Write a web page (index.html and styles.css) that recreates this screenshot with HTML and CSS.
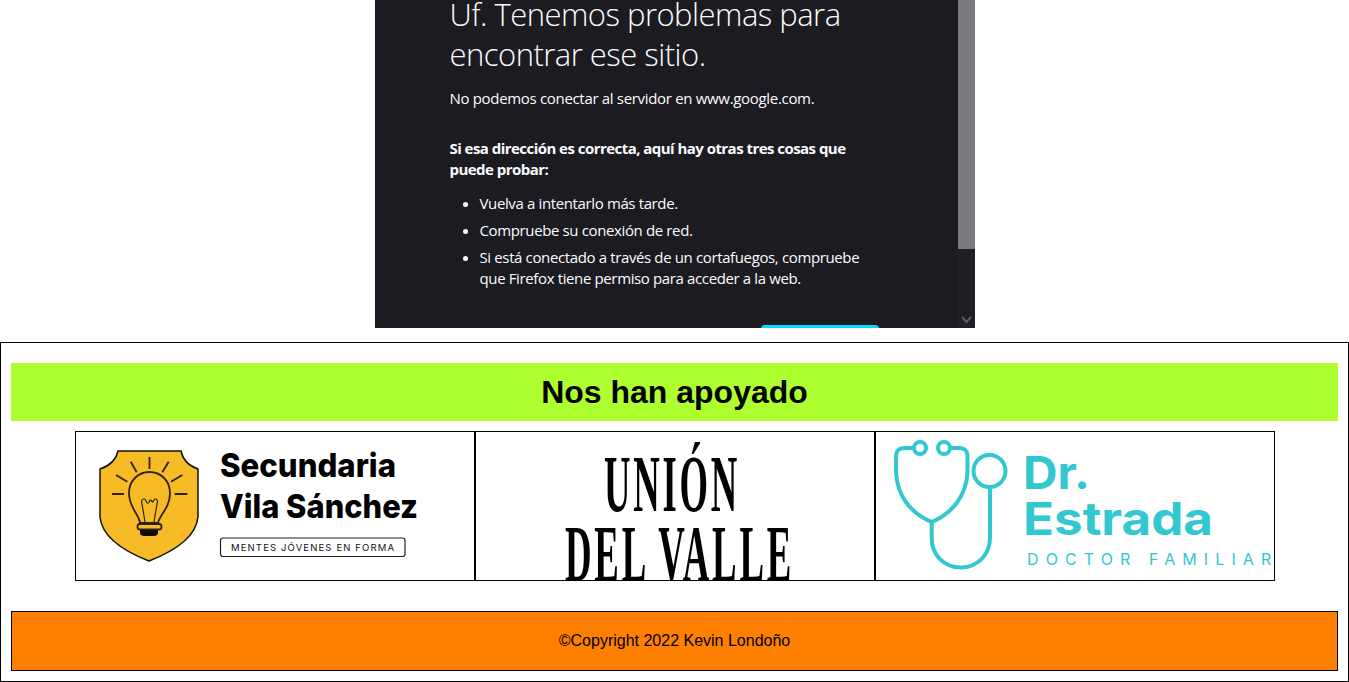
FILE: index.html
```html
<!DOCTYPE html>
<html lang="es">
<head>
<meta charset="utf-8">
<title>Nos han apoyado</title>
<link rel="stylesheet" href="styles.css">
</head>
<body>
<div class="video-row">
  <div class="error-panel">
    <div class="error-content">
      <h1 class="error-title">Uf. Tenemos problemas para<br>encontrar ese sitio.</h1>
      <p class="error-lead">No podemos conectar al servidor en www.google.com.</p>
      <p class="error-strong">Si esa dirección es correcta, aquí hay otras tres cosas que<br>puede probar:</p>
      <ul class="error-list">
        <li>Vuelva a intentarlo más tarde.</li>
        <li>Compruebe su conexión de red.</li>
        <li>Si está conectado a través de un cortafuegos, compruebe<br>que Firefox tiene permiso para acceder a la web.</li>
      </ul>
      <div class="error-action"><span class="error-button"></span></div>
    </div>
    <div class="scrollbar">
      <div class="scroll-thumb"></div>
      <svg class="scroll-arrow" viewBox="0 0 17 17" width="17" height="17"><path d="M4 6l4.500 5 4.500-5" fill="none" stroke="#5c5c62" stroke-width="2"/></svg>
    </div>
  </div>
</div>
<section class="support">
  <h2 class="support-title">Nos han apoyado</h2>
  <div class="logos">
    <div class="logo">
      <svg class="logo-art" viewBox="76 432 398 148" width="398" height="148">
        <path class="shield" d="M118 451H181C183 460 189 466 198 469V517C196 538 172 552 149 561C126 552 102 538 100 517V469C109 466 116 460 118 451Z"/>
        <g class="bulb">
          <path d="M140 523C139 514 129 508 129 493C129 481 138 472 149.500 472C161 472 170 481 170 493C170 508 160 514 158 523Z"/>
          <path d="M149.500 457V469M130.700 461.700L136.700 472.300M168.700 461.700L162.300 472.300M116 475L127.300 481.700M182.300 475L171 481.700M112 494H124M174.700 494H187.300"/>
          <path class="thin" d="M145 522L141.500 501C143 498 145 498 146 501C147 504 149 504 149.500 501C150.500 498 152.500 504 153.500 501C154.500 498 156.500 498 157.500 501L154 522"/>
          <rect x="137.500" y="524" width="24" height="5.500" rx="2.500"/>
        </g>
        <path class="bulb-base" d="M140 530H158V533C158 535 156 536 154 536H144C142 536 140 535 140 533Z"/>
        <text class="school" x="220" y="477" textLength="176" lengthAdjust="spacingAndGlyphs">Secundaria</text>
        <text class="school" x="220" y="518" textLength="198" lengthAdjust="spacingAndGlyphs">Vila Sánchez</text>
        <rect class="tag-box" x="220.500" y="538" width="184.500" height="18.500" rx="2.500"/>
        <text class="tag-text" x="231" y="551" textLength="163">MENTES JÓVENES EN FORMA</text>
      </svg>
    </div>
    <div class="logo">
      <svg class="logo-art" viewBox="476 432 398 148" width="398" height="148">
        <text class="valle" x="604" y="511" textLength="136" lengthAdjust="spacingAndGlyphs">UNIÓN</text>
        <text class="valle" x="565" y="581" textLength="229" lengthAdjust="spacingAndGlyphs">DEL VALLE</text>
      </svg>
    </div>
    <div class="logo">
      <svg class="logo-art" viewBox="876 432 398 148" width="398" height="148">
        <g class="scope">
          <circle cx="920" cy="448" r="6"/>
          <circle cx="944" cy="448" r="6"/>
          <circle cx="989.500" cy="471" r="16"/>
          <path d="M914 448H904C899 448 896 451 896 456V472C897 495 910 513 931.700 522C953 513 966.500 495 967.500 472V456C967.500 451 964.500 448 960 448H950"/>
          <path d="M931.700 522V538C931.700 555 944 567.500 961 567.500C977 567.500 990 555 990 538V487"/>
        </g>
        <text class="doctor" x="1023" y="489" textLength="67" lengthAdjust="spacingAndGlyphs">Dr.</text>
        <text class="doctor" x="1023" y="535" textLength="190" lengthAdjust="spacingAndGlyphs">Estrada</text>
        <text class="doctor-sub" x="1027" y="565">DOCTOR FAMILIAR</text>
      </svg>
    </div>
  </div>
  <footer class="copyright">©Copyright 2022 Kevin Londoño</footer>
</section>
</body>
</html>
```
FILE: styles.css
```css
* { box-sizing: border-box; }
html, body { margin: 0; padding: 0; background: #fff; }
body { font-family: "Liberation Sans", Arial, sans-serif; color: #000; overflow: hidden; }

.video-row { display: flex; justify-content: center; height: 342px; }
.error-panel {
  width: 600px; height: 328px; background: #1c1b22; color: #fbfbfe;
  display: flex; overflow: hidden;
}
.error-content { flex: 1; padding-left: 75px; font-family: "Open Sans", "Noto Sans", sans-serif; font-size: 15px; line-height: 21px; }
.error-title { margin: -6px 0 0; font-size: 31px; font-weight: 300; line-height: 40px; white-space: nowrap; letter-spacing: -0.52px; }
.error-lead { margin: 14px 0 0; white-space: nowrap; letter-spacing: -0.32px; }
.error-strong { margin: 29px 0 0; font-weight: 700; white-space: nowrap; letter-spacing: -0.54px; }
.error-list { margin: 13px 0 0; padding: 0 0 0 30px; white-space: nowrap; letter-spacing: -0.37px; }
.error-list li { margin-bottom: 6px; }
.error-action { margin-top: 36px; padding-left: 311px; }
.error-button { display: block; width: 118px; height: 12px; background: #00ddff; border-radius: 4px; }

.scrollbar { width: 17px; background: #1f1e25; position: relative; }
.scroll-thumb { height: 249px; background: #78787e; }
.scroll-arrow { position: absolute; left: 0; bottom: 0; display: block; }

.support { height: 340px; border: 1px solid #000; padding: 20px 10px 10px; }
.support-title {
  margin: 0 0 10px; height: 58px; background: #adff2f;
  font-size: 32px; font-weight: 700; line-height: 58px; text-align: center;
}
.logos { display: flex; justify-content: center; margin-bottom: 30px; }
.logo { width: 400px; height: 150px; border: 1px solid #000; background: #fff; }
.logo-art { display: block; overflow: hidden; }

.shield { fill: #f7bc25; stroke: #111; stroke-width: 1.500; }
.bulb { fill: none; stroke: #2d2413; stroke-width: 1.800; }
.bulb .thin { stroke-width: 1.200; }
.bulb-base { fill: #120e05; }
.school { font-family: "Inter", "Liberation Sans", sans-serif; font-weight: 800; font-size: 33px; fill: #000; }
.tag-box { fill: #fff; stroke: #222; stroke-width: 1.200; }
.tag-text { font-family: "Inter", "Liberation Sans", sans-serif; font-size: 9.500px; fill: #111; }
.valle { font-family: "Liberation Serif", serif; font-weight: 700; font-size: 80px; letter-spacing: 6px; fill: #000; }
.scope { fill: none; stroke: #33c8cf; stroke-width: 4; }
.doctor { font-family: "Inter", "Liberation Sans", sans-serif; font-weight: 700; font-size: 45px; fill: #33c8cf; }
.doctor-sub { font-family: "Inter", "Liberation Sans", sans-serif; font-size: 16px; letter-spacing: 7.100px; fill: #33c8cf; }

.copyright {
  height: 60px; border: 1px solid #000; background: #ff7f00;
  font-size: 16px; line-height: 58px; text-align: center;
}
```
